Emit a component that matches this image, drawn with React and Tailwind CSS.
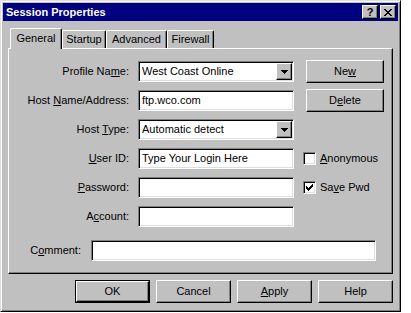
import React from "react";

const raised =
  "border border-t-white border-l-white border-r-black border-b-black shadow-[inset_-1px_-1px_#808080]";
const sunken =
  "border border-t-[#808080] border-l-[#808080] border-r-white border-b-white shadow-[inset_1px_1px_#000,inset_-1px_-1px_#dfdfdf]";

function Label({ children }) {
  return <span className="self-center justify-self-end whitespace-nowrap">{children}</span>;
}

function Field({ value, width = "w-full" }) {
  return (
    <div className={`flex h-[21px] ${width} items-center bg-white pl-[3px] ${sunken}`}>
      <span className="truncate">{value}</span>
    </div>
  );
}

function Combo({ value }) {
  return (
    <div className={`flex h-[21px] items-center bg-white pl-[3px] pr-[1px] ${sunken}`}>
      <span className="flex-1 truncate">{value}</span>
      <span className={`flex h-[17px] w-[16px] items-center justify-center bg-[#c0c0c0] ${raised}`}>
        <svg width="7" height="4" shapeRendering="crispEdges">
          <path d="M0 0h7v1H0zM1 1h5v1H1zM2 2h3v1H2zM3 3h1v1H3z" fill="#000" />
        </svg>
      </span>
    </div>
  );
}

function Button({ children, className = "" }) {
  return (
    <div
      className={`flex h-[23px] items-center justify-center bg-[#c0c0c0] ${raised} ${className}`}
    >
      {children}
    </div>
  );
}

function CheckBox({ checked, children }) {
  return (
    <div className="flex items-center gap-[4px] self-center">
      <span className={`flex h-[13px] w-[13px] items-center justify-center bg-white ${sunken}`}>
        {checked && (
          <svg width="7" height="7" shapeRendering="crispEdges">
            <path
              d="M6 0h1v1H6zM5 1h2v1H5zM0 2h1v1H0zM4 2h3v1H4zM0 3h2v1H0zM3 3h3v1H3zM0 4h5v1H0zM1 5h3v1H1zM2 6h1v1H2z"
              fill="#000"
            />
          </svg>
        )}
      </span>
      <span className="whitespace-nowrap">{children}</span>
    </div>
  );
}

function Tab({ label, active, width }) {
  if (active) {
    return (
      <div
        className={`relative z-10 -mb-px h-[21px] ${width} rounded-tl-[2px] rounded-tr-[2px] border-t border-l border-r border-t-white border-l-white border-r-black bg-[#c0c0c0] pt-[3px] text-center shadow-[inset_-1px_0_#808080]`}
      >
        {label}
      </div>
    );
  }
  return (
    <div
      className={`h-[18px] ${width} rounded-tl-[2px] rounded-tr-[2px] border-t border-l border-r border-t-white border-l-white border-r-black bg-[#c0c0c0] pt-[2px] text-center shadow-[inset_-1px_0_#808080]`}
    >
      {label}
    </div>
  );
}

export default function App() {
  return (
    <div className="h-[313px] w-[411px] bg-white">
      <div className="h-[312px] w-[401px] border border-t-[#dfdfdf] border-l-[#dfdfdf] border-r-black border-b-black bg-[#c0c0c0] p-[2px] font-['Liberation_Sans',Arial,sans-serif] text-[11px] leading-[13px] text-black shadow-[inset_1px_1px_#fff,inset_-1px_-1px_#808080]">
        <div className="flex h-[18px] items-center bg-[#000080] pl-[3px] pr-[2px]">
          <span className="font-bold text-white">Session Properties</span>
          <div className="ml-auto flex gap-[2px]">
            <div className={`flex h-[14px] w-[16px] items-center justify-center bg-[#c0c0c0] text-[11px] font-bold leading-[11px] ${raised}`}>
              ?
            </div>
            <div className={`flex h-[14px] w-[16px] items-center justify-center bg-[#c0c0c0] ${raised}`}>
              <svg width="8" height="7" shapeRendering="crispEdges">
                <path
                  d="M0 0h2v1H0zM6 0h2v1H6zM1 1h2v1H1zM5 1h2v1H5zM2 2h4v1H2zM3 3h2v1H3zM2 4h4v1H2zM1 5h2v1H1zM5 5h2v1H5zM0 6h2v1H0zM6 6h2v1H6z"
                  fill="#000"
                />
              </svg>
            </div>
          </div>
        </div>

        <div className="px-[5px] pt-[7px]">
          <div className="flex h-[20px] items-end pl-[2px]">
            <Tab label="General" active width="w-[52px]" />
            <Tab label="Startup" width="w-[44px]" />
            <Tab label="Advanced" width="w-[61px]" />
            <Tab label="Firewall" width="w-[47px]" />
          </div>

          <div className="h-[226px] border border-t-white border-l-white border-r-black border-b-black pt-[12px] shadow-[inset_-1px_-1px_#808080]">
            <div className="grid auto-rows-[21px] grid-cols-[120px_156px_87px] gap-x-[9px] gap-y-[8px]">
              <Label>
                Profile Na<u className="underline">m</u>e:
              </Label>
              <Combo value="West Coast Online" />
              <Button className="ml-[3px] w-[78px] self-center">
                <span>
                  Ne<u className="underline">w</u>
                </span>
              </Button>

              <Label>
                Host <u className="underline">N</u>ame/Address:
              </Label>
              <Field value="ftp.wco.com" />
              <Button className="ml-[3px] w-[78px] self-center">
                <span>
                  D<u className="underline">e</u>lete
                </span>
              </Button>

              <Label>
                Host <u className="underline">T</u>ype:
              </Label>
              <Combo value="Automatic detect" />
              <div />

              <Label>
                <u className="underline">U</u>ser ID:
              </Label>
              <Field value="Type Your Login Here" />
              <CheckBox>
                <u className="underline">A</u>nonymous
              </CheckBox>

              <Label>
                <u className="underline">P</u>assword:
              </Label>
              <Field value="" />
              <CheckBox checked>
                Sa<u className="underline">v</u>e Pwd
              </CheckBox>

              <Label>
                A<u className="underline">c</u>count:
              </Label>
              <Field value="" />
              <div />
            </div>

            <div className="mt-[13px] flex items-center gap-[10px]">
              <span className="w-[72px] text-right">
                C<u className="underline">o</u>mment:
              </span>
              <Field value="" width="w-[285px]" />
            </div>
          </div>

          <div className="mt-[6px] flex justify-end gap-[6px]">
            <div className="h-[23px] w-[75px] border border-black">
              <div className={`flex h-full items-center justify-center bg-[#c0c0c0] ${raised}`}>OK</div>
            </div>
            <Button className="w-[75px]">Cancel</Button>
            <Button className="w-[75px]">
              <span>
                <u className="underline">A</u>pply
              </span>
            </Button>
            <Button className="w-[75px]">Help</Button>
          </div>
        </div>
      </div>
    </div>
  );
}
